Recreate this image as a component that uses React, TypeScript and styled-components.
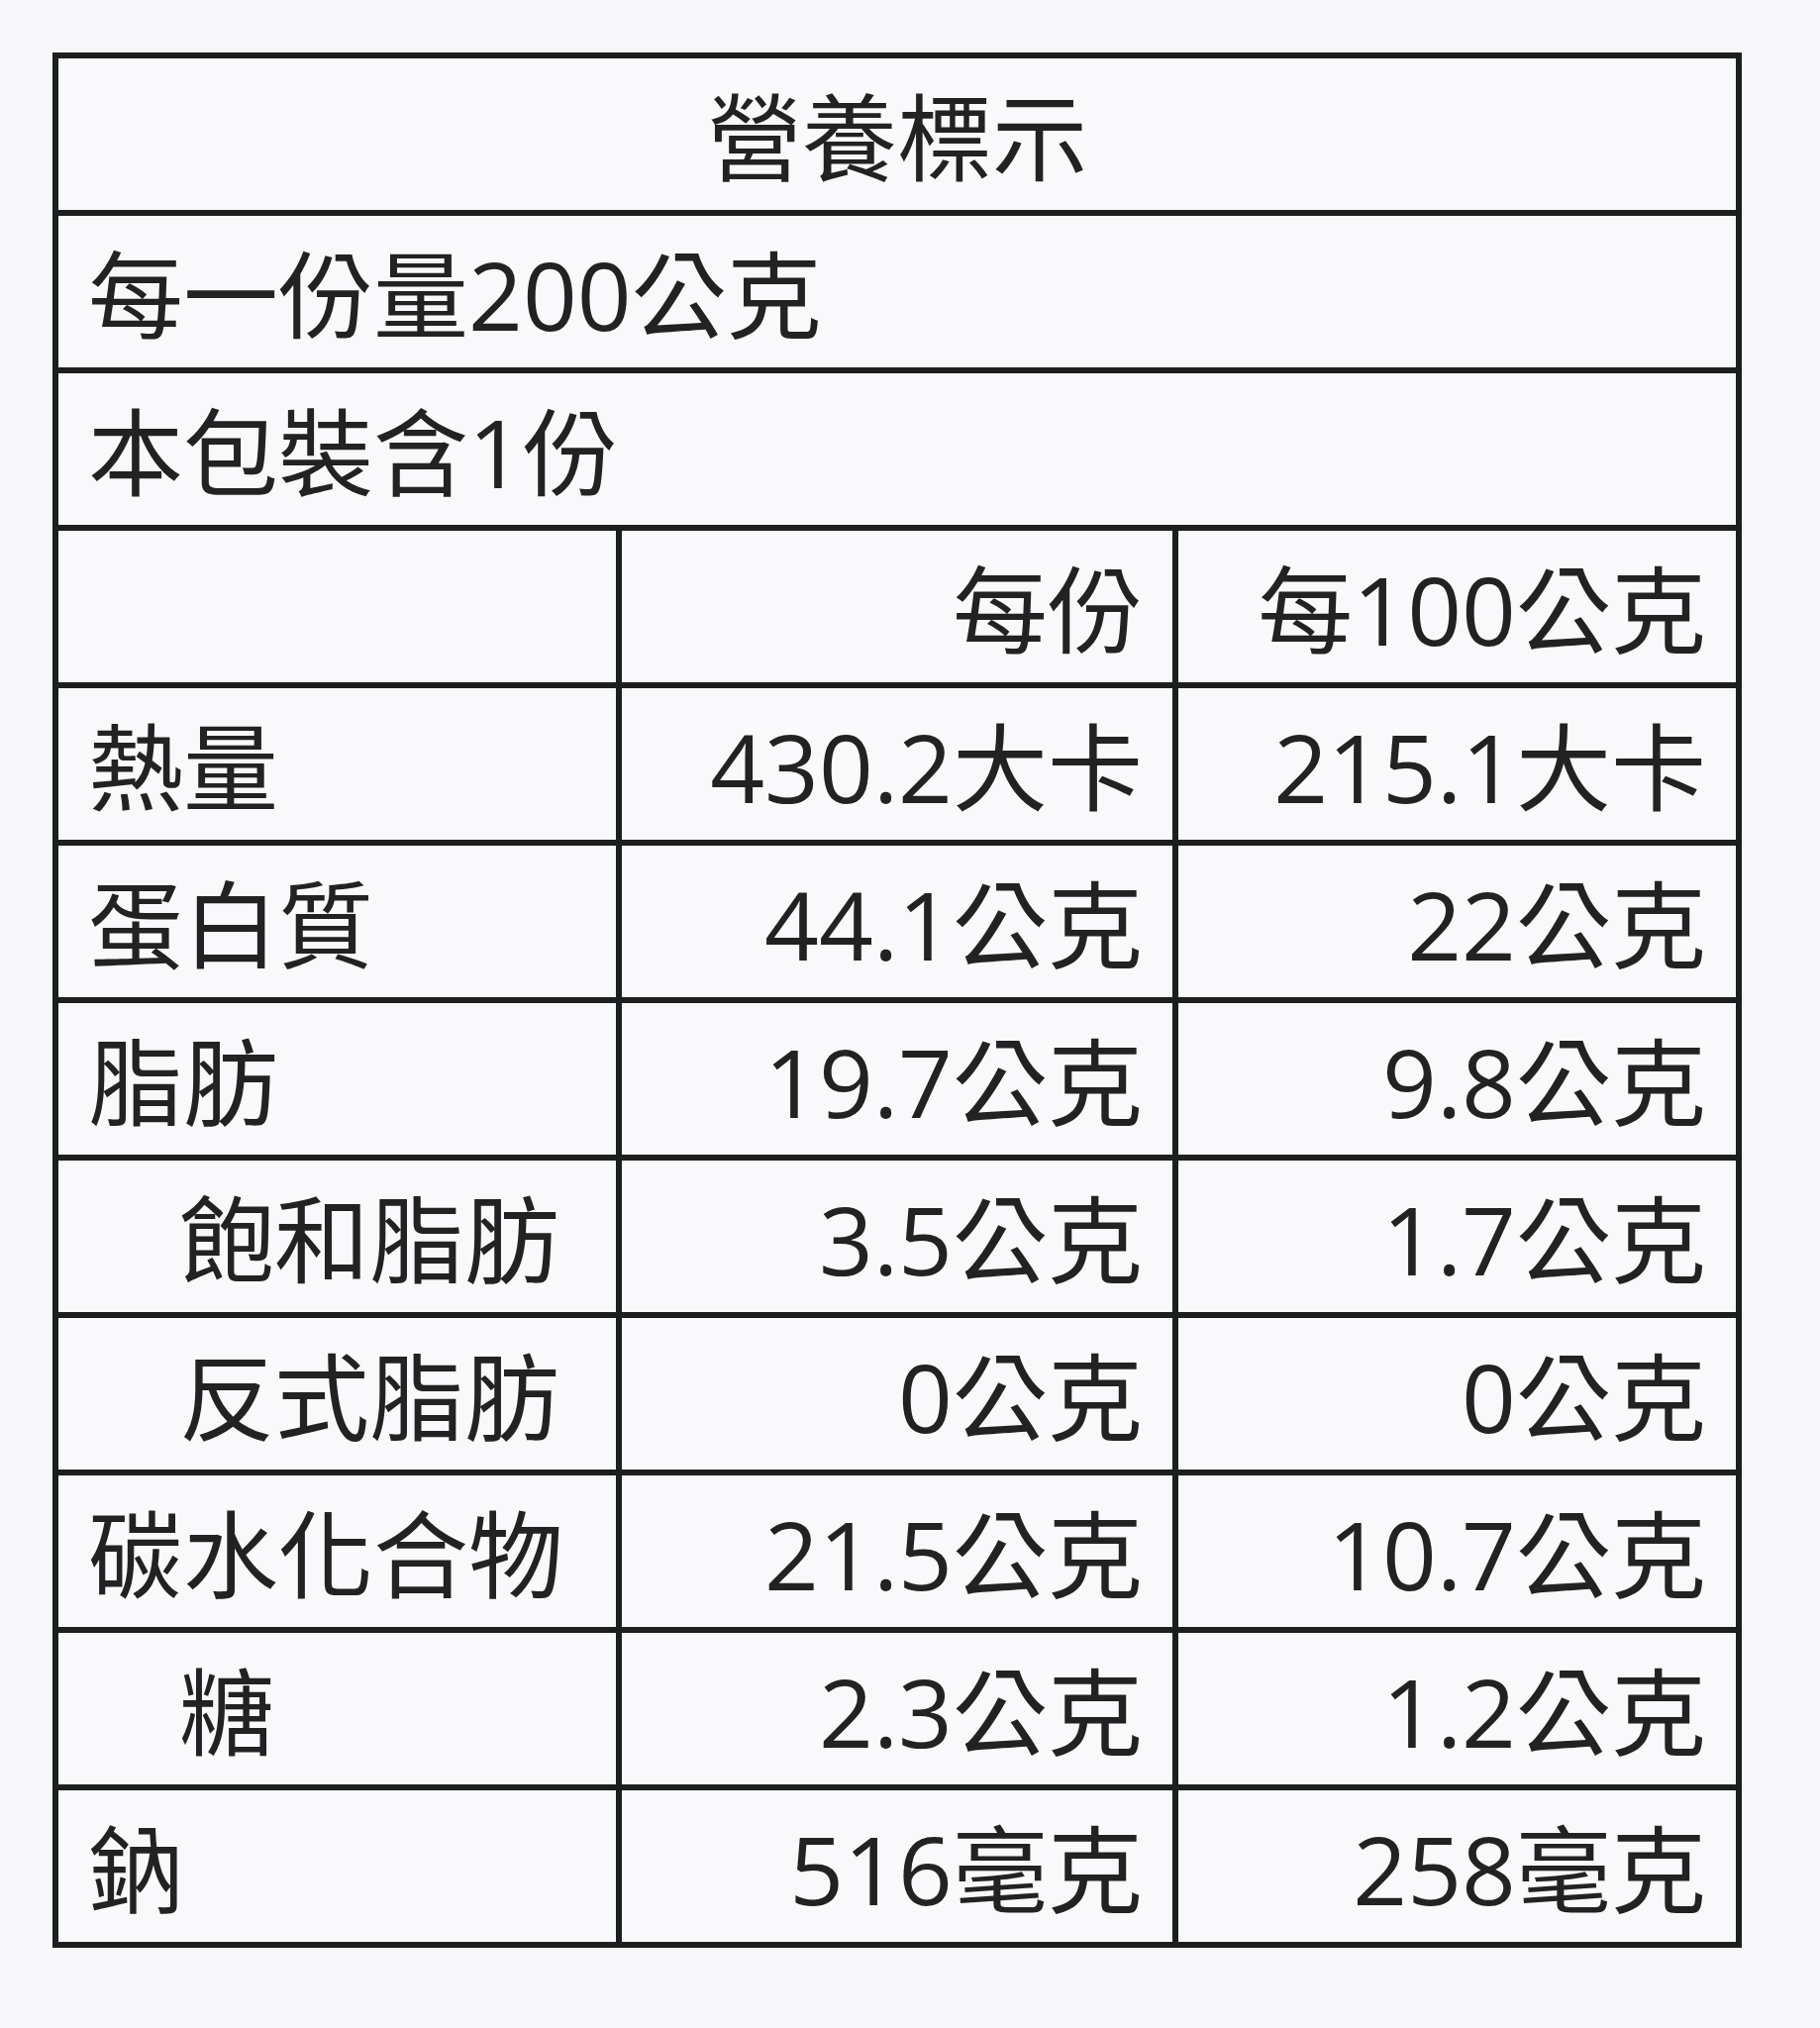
import React from "react";
import styled, { createGlobalStyle } from "styled-components";

const Global = createGlobalStyle`
  html, body {
    margin: 0;
    padding: 0;
    background: #f8f7f9;
  }
`;

const Page = styled.div`
  padding: 53px 0 0 53px;
  font-family: "Open Sans", "Noto Sans CJK TC", sans-serif;
  color: #222;
`;

const Table = styled.table`
  width: 1700px;
  border-collapse: collapse;
  table-layout: fixed;
  background: #f9f8fa;
`;

const Cell = styled.td<{ $align?: "left" | "right" | "center"; $indent?: boolean }>`
  height: 149px;
  border: 6px solid #1d1f1e;
  padding: 4px 30px 0 ${(p) => (p.$indent ? "122px" : "30px")};
  font-size: 96px;
  line-height: 1.1;
  font-weight: 400;
  text-align: ${(p) => p.$align ?? "left"};
  vertical-align: middle;
  white-space: nowrap;
`;

const rows: { name: string; indent?: boolean; a: string; b: string }[] = [
  { name: "熱量", a: "430.2大卡", b: "215.1大卡" },
  { name: "蛋白質", a: "44.1公克", b: "22公克" },
  { name: "脂肪", a: "19.7公克", b: "9.8公克" },
  { name: "飽和脂肪", indent: true, a: "3.5公克", b: "1.7公克" },
  { name: "反式脂肪", indent: true, a: "0公克", b: "0公克" },
  { name: "碳水化合物", a: "21.5公克", b: "10.7公克" },
  { name: "糖", indent: true, a: "2.3公克", b: "1.2公克" },
  { name: "鈉", a: "516毫克", b: "258毫克" },
];

export default function App() {
  return (
    <Page>
      <Global />
      <Table>
        <colgroup>
          <col style={{ width: 569 }} />
          <col style={{ width: 562 }} />
          <col style={{ width: 569 }} />
        </colgroup>
        <tbody>
          <tr>
            <Cell colSpan={3} $align="center">營養標示</Cell>
          </tr>
          <tr>
            <Cell colSpan={3}>每一份量200公克</Cell>
          </tr>
          <tr>
            <Cell colSpan={3}>本包裝含1份</Cell>
          </tr>
          <tr>
            <Cell></Cell>
            <Cell $align="right">每份</Cell>
            <Cell $align="right">每100公克</Cell>
          </tr>
          {rows.map((r) => (
            <tr key={r.name}>
              <Cell $indent={r.indent}>{r.name}</Cell>
              <Cell $align="right">{r.a}</Cell>
              <Cell $align="right">{r.b}</Cell>
            </tr>
          ))}
        </tbody>
      </Table>
    </Page>
  );
}
